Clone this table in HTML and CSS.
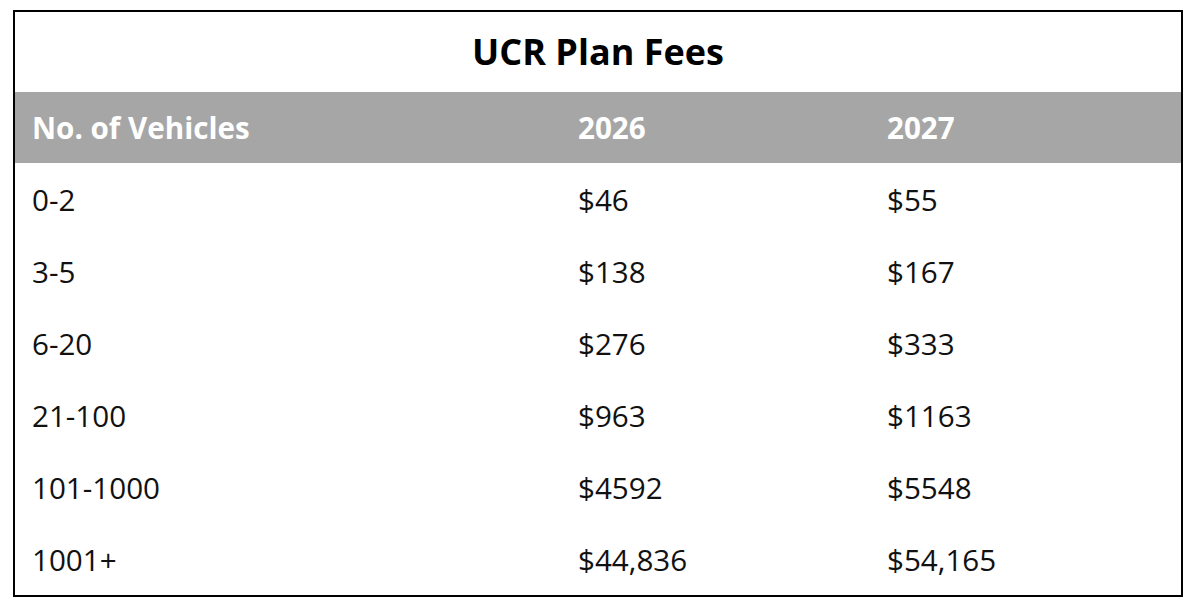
FILE: index.html
```html
<!DOCTYPE html>
<html>
<head>
<meta charset="utf-8">
<link rel="stylesheet" href="styles.css">
</head>
<body>
<div class="card">
  <table class="fees">
    <caption class="title">UCR Plan Fees</caption>
    <colgroup>
      <col class="c1"><col class="c2"><col class="c3">
    </colgroup>
    <thead>
      <tr class="head"><th>No. of Vehicles</th><th>2026</th><th>2027</th></tr>
    </thead>
    <tbody>
      <tr><td>0-2</td><td>$46</td><td>$55</td></tr>
      <tr><td>3-5</td><td>$138</td><td>$167</td></tr>
      <tr><td>6-20</td><td>$276</td><td>$333</td></tr>
      <tr><td>21-100</td><td>$963</td><td>$1163</td></tr>
      <tr><td>101-1000</td><td>$4592</td><td>$5548</td></tr>
      <tr><td>1001+</td><td>$44,836</td><td>$54,165</td></tr>
    </tbody>
  </table>
</div>
</body>
</html>
```
FILE: styles.css
```css
html, body {
  margin: 0;
  padding: 0;
  background: #ffffff;
}
body {
  padding: 10px 15px 0 13px;
  font-family: "Open Sans", "Liberation Sans", sans-serif;
  color: #111111;
}
.card {
  width: 1166px;
  border: 2px solid #000000;
  background: #ffffff;
}
.fees {
  width: 100%;
  border-collapse: collapse;
  table-layout: fixed;
}
.c1 { width: 546px; }
.c2 { width: 309px; }
.c3 { width: 311px; }
.title {
  height: 80px;
  line-height: 80px;
  font-size: 36px;
  font-weight: 700;
  color: #000000;
  text-align: center;
  padding: 0;
}
.head {
  background: #a6a6a6;
}
.head th {
  height: 71px;
  padding: 0 0 0 17px;
  text-align: left;
  font-size: 29.6px;
  font-weight: 700;
  color: #ffffff;
}
td {
  height: 72px;
  padding: 0 0 0 17px;
  font-size: 29.6px;
  font-weight: 400;
  color: #111111;
}
```
